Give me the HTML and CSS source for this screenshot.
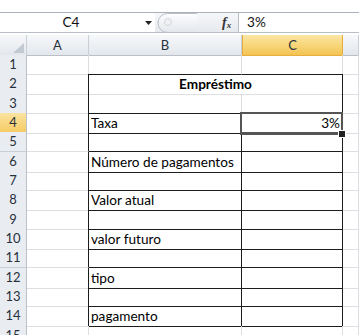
FILE: index.html
```html
<!DOCTYPE html>
<html lang="pt">
<head>
  <meta charset="UTF-8">
  <title>Empréstimo</title>
  <link rel="stylesheet" href="styles.css">
</head>
<body>
  <div class="formula-bar">
    <div class="name-box">C4</div>
    <div class="name-drop">
      <svg width="7" height="4" viewBox="0 0 7 4"><path d="M0 0h7L3.5 4z" fill="#222"/></svg>
    </div>
    <div class="fx-area">
      <svg class="splitter" width="40" height="20" viewBox="0 0 40 20">
        <defs>
          <linearGradient id="pill" x1="0" y1="0" x2="0" y2="1">
            <stop offset="0" stop-color="#fdfdfe"/>
            <stop offset="1" stop-color="#e3e7ec"/>
          </linearGradient>
        </defs>
        <path d="M40 0.5H10.5a9.5 9.5 0 0 0 0 19H40" fill="url(#pill)" stroke="#b9c0c8"/>
        <circle cx="11" cy="9" r="3.5" fill="#eef0f3" stroke="#d3d7dc"/>
      </svg>
      <span class="fx">f<sub>x</sub></span>
    </div>
    <div class="formula-input">3%</div>
  </div>

  <div class="sheet">
    <div class="row head">
      <div class="corner">
        <svg width="11" height="10" viewBox="0 0 11 10"><path d="M11 0v10H0z" fill="#c3c9d0"/></svg>
      </div>
      <div class="ch">A</div>
      <div class="ch">B</div>
      <div class="ch active">C</div>
      <div class="ch"></div>
    </div>

    <div class="row">
      <div class="rh">1</div>
      <div class="cell"></div>
      <div class="cell above"></div>
      <div class="cell above"></div>
      <div class="cell"></div>
    </div>
    <div class="row">
      <div class="rh">2</div>
      <div class="cell edge"></div>
      <div class="cell merged title">Empréstimo</div>
      <div class="cell"></div>
    </div>
    <div class="row">
      <div class="rh">3</div>
      <div class="cell edge"></div>
      <div class="cell ruled"></div>
      <div class="cell boxed"></div>
      <div class="cell"></div>
    </div>
    <div class="row">
      <div class="rh active">4</div>
      <div class="cell edge"></div>
      <div class="cell boxed">Taxa</div>
      <div class="cell boxed num selected">3%</div>
      <div class="cell"></div>
    </div>
    <div class="row">
      <div class="rh">5</div>
      <div class="cell edge"></div>
      <div class="cell boxed"></div>
      <div class="cell boxed"></div>
      <div class="cell"></div>
    </div>
    <div class="row">
      <div class="rh">6</div>
      <div class="cell edge"></div>
      <div class="cell boxed">Número de pagamentos</div>
      <div class="cell boxed"></div>
      <div class="cell"></div>
    </div>
    <div class="row">
      <div class="rh">7</div>
      <div class="cell edge"></div>
      <div class="cell boxed"></div>
      <div class="cell boxed"></div>
      <div class="cell"></div>
    </div>
    <div class="row">
      <div class="rh">8</div>
      <div class="cell edge"></div>
      <div class="cell boxed">Valor atual</div>
      <div class="cell boxed"></div>
      <div class="cell"></div>
    </div>
    <div class="row">
      <div class="rh">9</div>
      <div class="cell edge"></div>
      <div class="cell boxed"></div>
      <div class="cell boxed"></div>
      <div class="cell"></div>
    </div>
    <div class="row">
      <div class="rh">10</div>
      <div class="cell edge"></div>
      <div class="cell boxed">valor futuro</div>
      <div class="cell boxed"></div>
      <div class="cell"></div>
    </div>
    <div class="row">
      <div class="rh">11</div>
      <div class="cell edge"></div>
      <div class="cell boxed"></div>
      <div class="cell boxed"></div>
      <div class="cell"></div>
    </div>
    <div class="row">
      <div class="rh">12</div>
      <div class="cell edge"></div>
      <div class="cell boxed">tipo</div>
      <div class="cell boxed"></div>
      <div class="cell"></div>
    </div>
    <div class="row">
      <div class="rh">13</div>
      <div class="cell edge"></div>
      <div class="cell boxed"></div>
      <div class="cell boxed"></div>
      <div class="cell"></div>
    </div>
    <div class="row">
      <div class="rh">14</div>
      <div class="cell edge"></div>
      <div class="cell boxed">pagamento</div>
      <div class="cell boxed"></div>
      <div class="cell"></div>
    </div>
    <div class="row">
      <div class="rh">15</div>
      <div class="cell"></div>
      <div class="cell"></div>
      <div class="cell"></div>
      <div class="cell"></div>
    </div>
  </div>
</body>
</html>
```

FILE: styles.css
```css
:root {
  --grid: #dcdee1;
  --ink: #1c1c1c;
  --head-bg: #e9ecf0;
  --head-line: #c9cfd6;
  --bar-line: #a9b0b8;
}

* {
  box-sizing: border-box;
}

body {
  margin: 0;
  width: 359px;
  height: 335px;
  overflow: hidden;
  background: #fff;
  font-family: Lato, "Liberation Sans", sans-serif;
  font-size: 13.6px;
  color: #000;
}

/* formula bar */

.formula-bar {
  display: flex;
  height: 21px;
  margin-top: 12px;
  border-top: 1px solid var(--bar-line);
  border-bottom: 1px solid #b8bec6;
}

.name-box {
  width: 142px;
  line-height: 19px;
  text-align: center;
  color: #111;
}

.name-drop {
  width: 13px;
  display: flex;
  align-items: center;
  justify-content: center;
}

.fx-area {
  width: 83px;
  display: flex;
  align-items: center;
  background: linear-gradient(#f6f7f9, #e6e9ee);
}

.splitter {
  display: block;
  margin-left: 2px;
}

.fx {
  margin-left: 25px;
  font-family: "Liberation Serif", serif;
  font-style: italic;
  font-weight: bold;
  font-size: 14px;
  color: #333;
}

.fx sub {
  font-size: 9px;
  vertical-align: -1px;
}

.formula-input {
  flex: 1;
  border-left: 1px solid #b8bec6;
  padding-left: 8px;
  line-height: 19px;
  color: #111;
}

/* sheet */

.sheet {
  margin-top: 2px;
}

.row {
  display: grid;
  grid-template-columns: 27px 62px 153px 101px 1fr;
  height: 19.33px;
}

.row.head {
  height: 20px;
}

.corner,
.ch {
  background: linear-gradient(#f7f8fa, #e3e7ec);
  border-right: 1px solid var(--head-line);
  border-bottom: 1px solid #b9c0c8;
}

.corner {
  display: flex;
  align-items: flex-end;
  justify-content: flex-end;
  padding: 0 2px 2px 0;
}

.ch {
  text-align: center;
  line-height: 20px;
  font-size: 13px;
  color: #27313d;
}

.ch.active {
  background: linear-gradient(#fbe6a6, #f8d77a 50%, #f3c354);
  border-color: #e6ae3c;
  border-left: 1px solid #e6ae3c;
}

.rh {
  background: var(--head-bg);
  border-right: 1px solid #b9c0c8;
  border-bottom: 1px solid var(--head-line);
  text-align: center;
  font-size: 13px;
  line-height: 19px;
  color: #27313d;
}

.rh.active {
  background: linear-gradient(#fbe3a0, #f5ca62);
  border-bottom-color: #e6ae3c;
}

.cell {
  border-right: 1px solid var(--grid);
  border-bottom: 1px solid var(--grid);
  padding: 0 2px;
  line-height: 20px;
  white-space: nowrap;
}

.cell.above {
  border-bottom-color: var(--ink);
}

.cell.edge {
  border-right-color: var(--ink);
}

.cell.merged {
  grid-column: span 2;
  border-right-color: var(--ink);
}

.cell.title {
  text-align: center;
  font-weight: bold;
}

.cell.ruled {
  border-bottom-color: var(--ink);
}

.cell.boxed {
  border-right-color: var(--ink);
  border-bottom-color: var(--ink);
}

.cell.num {
  text-align: right;
}

.cell.selected {
  position: relative;
}

.cell.selected::before {
  content: "";
  position: absolute;
  left: -2px;
  top: -1px;
  right: -1px;
  bottom: -2px;
  border: 2px solid #555;
  border-bottom-width: 3px;
}

.cell.selected::after {
  content: "";
  position: absolute;
  right: -4px;
  bottom: -5px;
  width: 6px;
  height: 6px;
  background: #222;
  border: 1px solid #fff;
}
```
